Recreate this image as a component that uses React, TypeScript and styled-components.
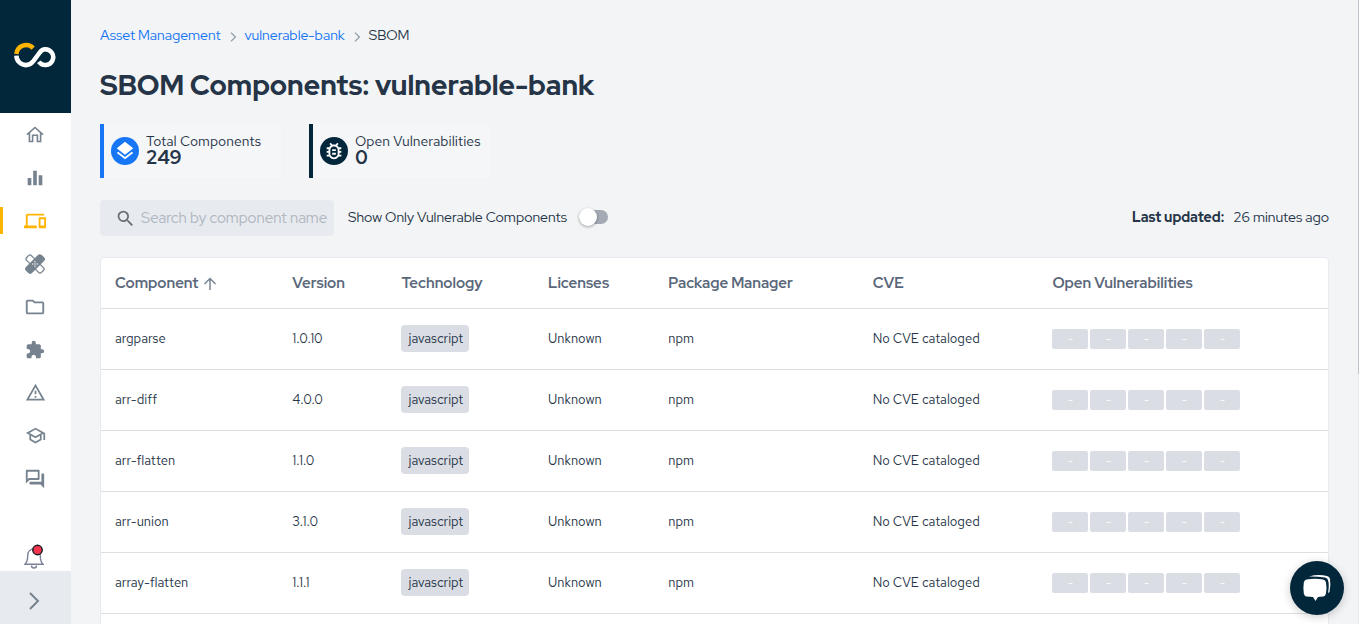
import React, { useState } from "react";
import styled, { createGlobalStyle, css } from "styled-components";
import {
  MdDevices,
  MdEqualizer,
  MdExtension,
  MdLayers,
  MdOutlineBugReport,
  MdOutlineFolder,
  MdOutlineQuestionAnswer,
  MdOutlineSchool,
  MdOutlineWarningAmber,
  MdSearch,
} from "react-icons/md";

const display = `"Red Hat Display", "Red Hat Text", Inter, "Liberation Sans", sans-serif`;

const GlobalStyle = createGlobalStyle`
  *, *::before, *::after { box-sizing: border-box; }
  body {
    margin: 0;
    background: #f3f4f6;
    color: #253447;
    font-family: "Red Hat Text", "Red Hat Display", Inter, "Liberation Sans", sans-serif;
    font-size: 14px;
    font-weight: 400;
  }
  button, input { font: inherit; color: inherit; }
  button { border: 0; padding: 0; background: none; cursor: pointer; }
`;

const Shell = styled.div`
  display: flex;
  height: 100vh;
  overflow: hidden;
`;

const Sidebar = styled.aside`
  display: flex;
  flex-direction: column;
  flex: none;
  width: 71px;
  background: #fff;
`;

const LogoLink = styled.a`
  display: flex;
  align-items: center;
  justify-content: center;
  flex: none;
  height: 113px;
  padding: 0 1px 3px 0;
  background: #02273a;
`;

const Nav = styled.nav`
  display: flex;
  flex-direction: column;
  flex: 1;
  min-height: 0;
`;

const NavItem = styled.a<{ $active?: boolean }>`
  display: flex;
  align-items: center;
  justify-content: center;
  flex: none;
  height: 43px;
  padding-right: 1px;
  color: #76838f;
  ${(p) =>
    p.$active &&
    css`
      color: #ffb400;
      background: linear-gradient(#ffb400, #ffb400) left center / 3px 27px no-repeat;
    `}
`;

const Bell = styled.button`
  display: flex;
  justify-content: center;
  flex: none;
  padding: 0 3px 0 0;
  height: 27px;
`;

const Expand = styled.button`
  display: flex;
  align-items: center;
  justify-content: center;
  flex: none;
  height: 53px;
  padding: 6px 3px 0 0;
  background: #e7eaef;
  color: #76838f;
`;

const Main = styled.main`
  flex: 1;
  min-width: 0;
  padding: 25px 29px 0;
  overflow: auto;
  scrollbar-width: none;
`;

const ScrollTrack = styled.div`
  flex: none;
  width: 1px;
  background: linear-gradient(#bcc3cd, #bcc3cd) top / 1px 60% no-repeat #e7eaef;
`;

const Breadcrumb = styled.nav`
  display: flex;
  align-items: center;
  gap: 8px;
  line-height: 20px;
  font-family: ${display};
`;

const Crumb = styled.a`
  color: #1776f5;
  text-decoration: none;
`;

const Title = styled.h1`
  margin: 20px 0 0;
  font-family: ${display};
  font-size: 28px;
  line-height: 40px;
  font-weight: 800;
`;

const Stats = styled.div`
  display: flex;
  gap: 28px;
  margin-top: 19px;
`;

const Stat = styled.section<{ $color: string }>`
  display: flex;
  align-items: center;
  gap: 7px;
  min-width: 181px;
  height: 54px;
  padding: 0 7px;
  border-left: 4px solid ${(p) => p.$color};
  background: #f5f6f8;
`;

const StatIcon = styled.span<{ $color: string }>`
  display: grid;
  place-items: center;
  width: 28px;
  height: 28px;
  border-radius: 50%;
  background: ${(p) => p.$color};
  color: #fff;
`;

const StatText = styled.div`
  padding-bottom: 2px;
`;

const StatLabel = styled.div`
  line-height: 16px;
`;

const StatValue = styled.div`
  font-size: 19px;
  line-height: 18px;
  font-weight: 600;
`;

const Toolbar = styled.div`
  display: flex;
  align-items: center;
  margin-top: 22px;
  height: 36px;
`;

const Search = styled.label`
  display: flex;
  align-items: center;
  gap: 5px;
  width: 234px;
  height: 36px;
  padding: 0 6px 0 15px;
  border-radius: 4px;
  background: #e7eaef;
  color: #6b6f75;
  svg { flex: none; }
`;

const SearchInput = styled.input`
  flex: 1;
  min-width: 0;
  padding: 0;
  border: 0;
  outline: 0;
  background: none;
  font-family: ${display};
  font-size: 15px;
  &::placeholder { color: #b0b7c1; opacity: 1; }
`;

const Toggle = styled.label`
  display: flex;
  align-items: center;
  gap: 12px;
  margin-left: 14px;
  padding-bottom: 2px;
  font-family: ${display};
`;

const Switch = styled.input`
  appearance: none;
  display: flex;
  align-items: center;
  width: 29px;
  height: 14px;
  margin: 0;
  border-radius: 7px;
  background: #a3aab4;
  cursor: pointer;
  &::before {
    content: "";
    flex: none;
    width: 18px;
    height: 18px;
    border-radius: 50%;
    background: #fff;
    box-shadow: 0 1px 3px rgba(0, 0, 0, 0.35);
  }
  &:checked { justify-content: flex-end; background: #1776f5; }
`;

const Updated = styled.div`
  display: flex;
  gap: 9px;
  margin-left: auto;
  padding-bottom: 2px;
  font-family: ${display};
  strong { font-weight: 800; }
`;

const Card = styled.div`
  margin-top: 21px;
  padding-bottom: 52px;
  border: 1px solid #e7eaef;
  border-radius: 4px;
  background: #fff;
`;

const Table = styled.table`
  width: 100%;
  table-layout: fixed;
  border-spacing: 0;
`;

const Th = styled.th<{ $width?: string }>`
  width: ${(p) => p.$width ?? "auto"};
  height: 51px;
  padding: 0 14px;
  border-bottom: 1px solid #dcdfe3;
  color: #5a677a;
  font-family: ${display};
  font-size: 15px;
  font-weight: 700;
  text-align: left;
  white-space: nowrap;
`;

const Sort = styled.button`
  display: flex;
  align-items: center;
  gap: 5px;
`;

const Td = styled.td`
  height: 61px;
  padding: 0 14px 2px;
  border-bottom: 1px solid #dcdfe3;
  font-size: 13px;
  white-space: nowrap;
`;

const BoxTd = styled(Td)`
  padding-bottom: 0;
`;

const Tag = styled.span`
  display: inline-block;
  padding: 0 6px 0 7px;
  border-radius: 4px;
  background: #dadde4;
  line-height: 27px;
`;

const Severities = styled.div`
  display: flex;
  gap: 2px;
`;

const Severity = styled.span`
  width: 36px;
  border-radius: 2px;
  background: #dadde4;
  color: #fff;
  line-height: 20px;
  font-size: 12px;
  text-align: center;
`;

const Chat = styled.button`
  position: fixed;
  right: 15px;
  bottom: 9px;
  display: grid;
  place-items: center;
  width: 54px;
  height: 54px;
  border-radius: 50%;
  background: #02273a;
  box-shadow: 0 2px 10px rgba(0, 0, 0, 0.2);
`;

const CrumbSeparator = styled.span`
  display: flex;
  padding: 3px 0 0 1px;
  color: #8a94a1;
`;

const Logo = () => (
  <svg width="42" height="28" viewBox="14 40.500 43 29" fill="none" strokeWidth="4.700">
    <path d="M16.2 54A10.2 10.2 0 0 1 33.6 47.8" stroke="#ffb400" />
    <path
      d="M16.2 55.6A10.2 10.2 0 0 0 26 65.500C29.500 65.500 32 63.500 34 61L40 53C41.500 50.500 43.500 49 46 49A8.200 8.200 0 1 1 39.500 62"
      stroke="#fff"
    />
  </svg>
);

const HomeIcon = () => (
  <svg width="18" height="17" viewBox="0 0 18 17" fill="none" stroke="currentColor" strokeWidth="1.600">
    <path d="M1 8.600L9 1.500L17 8.600M3.400 7V15.500H6.600V9.300H11.400V15.500H14.600V7" />
  </svg>
);

const PatchIcon = () => (
  <svg width="20" height="20" viewBox="0 0 20 20">
    <g transform="rotate(45 10 10)" stroke="currentColor" strokeWidth="1.300">
      <rect x="-0.500" y="6.600" width="21" height="6.800" rx="2" fill="none" />
      <rect x="6.300" y="-0.500" width="7.400" height="21" rx="2" fill="currentColor" />
    </g>
    <g fill="#fff">
      <circle cx="10" cy="7.800" r="0.700" />
      <circle cx="10" cy="12.200" r="0.700" />
      <circle cx="7.800" cy="10" r="0.700" />
      <circle cx="12.200" cy="10" r="0.700" />
      <circle cx="10" cy="10" r="0.700" />
    </g>
  </svg>
);

const BellIcon = () => (
  <svg width="20" height="25" viewBox="0 0 20 25" fill="none">
    <path
      d="M1 20.200H19C16.500 18 16.300 15 16.300 11.500C16.300 7.500 13.500 5 10 5S3.700 7.500 3.700 11.500C3.700 15 3.500 18 1 20.200Z"
      stroke="#7d8296"
      strokeWidth="1.400"
    />
    <path d="M7.500 21.500C7.500 24.800 12.500 24.800 12.500 21.500" stroke="#7d8296" strokeWidth="1.400" />
    <circle cx="13.500" cy="6" r="4.700" fill="#f5344e" stroke="#1d1f27" strokeWidth="1.500" />
  </svg>
);

const ChatIcon = () => (
  <svg width="28" height="28" viewBox="0 0 28 28">
    <path d="M6 2.500Q15 0 24 2Q26.500 2.500 27 5Q28 11 26.500 18L25 19Q26.500 11 25 6Q24.500 4 22 3.500Q14 2.300 6 2.500Z" fill="#fff" />
    <path
      d="M3.500 5.500Q12 3.800 20 5.500Q22.500 6 23 8.500Q24 14 23 19.500Q22.500 22 20 22.500L15 23L12.500 27L10 23L3.500 22.500Q1.300 22 .8 19.500Q0 14 .8 8.500Q1.300 6 3.500 5.500Z"
      fill="#fff"
    />
  </svg>
);

const Chevron = ({ height }: { height: number }) => (
  <svg width={height / 2 + 2} height={height} viewBox="0 0 11 18" fill="none" stroke="currentColor" strokeWidth="2">
    <path d="M1 1L9 9L1 17" />
  </svg>
);

const ArrowUp = () => (
  <svg width="14" height="14" viewBox="0 0 14 14" fill="none" stroke="#7a8594" strokeWidth="1.500">
    <path d="M7 14V3M1.500 8L7 2.500L12.500 8" />
  </svg>
);

const navItems = [
  { label: "Home", icon: <HomeIcon /> },
  { label: "Dashboard", icon: <MdEqualizer size={22} /> },
  { label: "Assets", icon: <MdDevices size={22} />, active: true },
  { label: "Remediation", icon: <PatchIcon /> },
  { label: "Projects", icon: <MdOutlineFolder size={22} /> },
  { label: "Integrations", icon: <MdExtension size={20} /> },
  { label: "Risks", icon: <MdOutlineWarningAmber size={21} /> },
  { label: "Training", icon: <MdOutlineSchool size={21} /> },
  { label: "Support", icon: <MdOutlineQuestionAnswer size={22} /> },
];

const columns = [
  { name: "Version", width: "8.900%" },
  { name: "Technology", width: "11.950%" },
  { name: "Licenses", width: "9.800%" },
  { name: "Package Manager", width: "16.650%" },
  { name: "CVE", width: "14.650%" },
  { name: "Open Vulnerabilities" },
];

const components = [
  { name: "argparse", version: "1.0.10" },
  { name: "arr-diff", version: "4.0.0" },
  { name: "arr-flatten", version: "1.1.0" },
  { name: "arr-union", version: "3.1.0" },
  { name: "array-flatten", version: "1.1.1" },
];

export default function App() {
  const [onlyVulnerable, setOnlyVulnerable] = useState(false);
  return (
    <>
      <GlobalStyle />
      <Shell>
        <Sidebar>
          <LogoLink href="#" aria-label="Home page">
            <Logo />
          </LogoLink>
          <Nav>
            {navItems.map((item) => (
              <NavItem key={item.label} href="#" aria-label={item.label} $active={item.active}>
                {item.icon}
              </NavItem>
            ))}
          </Nav>
          <Bell aria-label="Notifications">
            <BellIcon />
          </Bell>
          <Expand aria-label="Expand menu">
            <Chevron height={18} />
          </Expand>
        </Sidebar>
        <Main>
          <Breadcrumb aria-label="Breadcrumb">
            <Crumb href="#">Asset Management</Crumb>
            <CrumbSeparator>
              <Chevron height={10} />
            </CrumbSeparator>
            <Crumb href="#">vulnerable-bank</Crumb>
            <CrumbSeparator>
              <Chevron height={10} />
            </CrumbSeparator>
            <span>SBOM</span>
          </Breadcrumb>
          <Title>SBOM Components: vulnerable-bank</Title>
          <Stats>
            <Stat $color="#1776f5">
              <StatIcon $color="#1776f5">
                <MdLayers size={22} />
              </StatIcon>
              <StatText>
                <StatLabel>Total Components</StatLabel>
                <StatValue>249</StatValue>
              </StatText>
            </Stat>
            <Stat $color="#02273a">
              <StatIcon $color="#02273a">
                <MdOutlineBugReport size={22} />
              </StatIcon>
              <StatText>
                <StatLabel>Open Vulnerabilities</StatLabel>
                <StatValue>0</StatValue>
              </StatText>
            </Stat>
          </Stats>
          <Toolbar>
            <Search>
              <MdSearch size={21} />
              <SearchInput type="text" aria-label="Search" placeholder="Search by component name" />
            </Search>
            <Toggle>
              Show Only Vulnerable Components
              <Switch
                type="checkbox"
                role="switch"
                checked={onlyVulnerable}
                onChange={(e) => setOnlyVulnerable(e.target.checked)}
              />
            </Toggle>
            <Updated>
              <strong>Last updated:</strong>
              <span>26 minutes ago</span>
            </Updated>
          </Toolbar>
          <Card>
            <Table>
              <thead>
                <tr>
                  <Th $width="14.450%">
                    <Sort>
                      Component <ArrowUp />
                    </Sort>
                  </Th>
                  {columns.map((column) => (
                    <Th key={column.name} $width={column.width}>
                      {column.name}
                    </Th>
                  ))}
                </tr>
              </thead>
              <tbody>
                {components.map((component) => (
                  <tr key={component.name}>
                    <Td>{component.name}</Td>
                    <Td>{component.version}</Td>
                    <Td>
                      <Tag>javascript</Tag>
                    </Td>
                    <Td>Unknown</Td>
                    <Td>npm</Td>
                    <Td>No CVE cataloged</Td>
                    <BoxTd>
                      <Severities>
                        {[0, 1, 2, 3, 4].map((level) => (
                          <Severity key={level}>-</Severity>
                        ))}
                      </Severities>
                    </BoxTd>
                  </tr>
                ))}
              </tbody>
            </Table>
          </Card>
        </Main>
        <ScrollTrack />
      </Shell>
      <Chat aria-label="Open chat">
        <ChatIcon />
      </Chat>
    </>
  );
}
